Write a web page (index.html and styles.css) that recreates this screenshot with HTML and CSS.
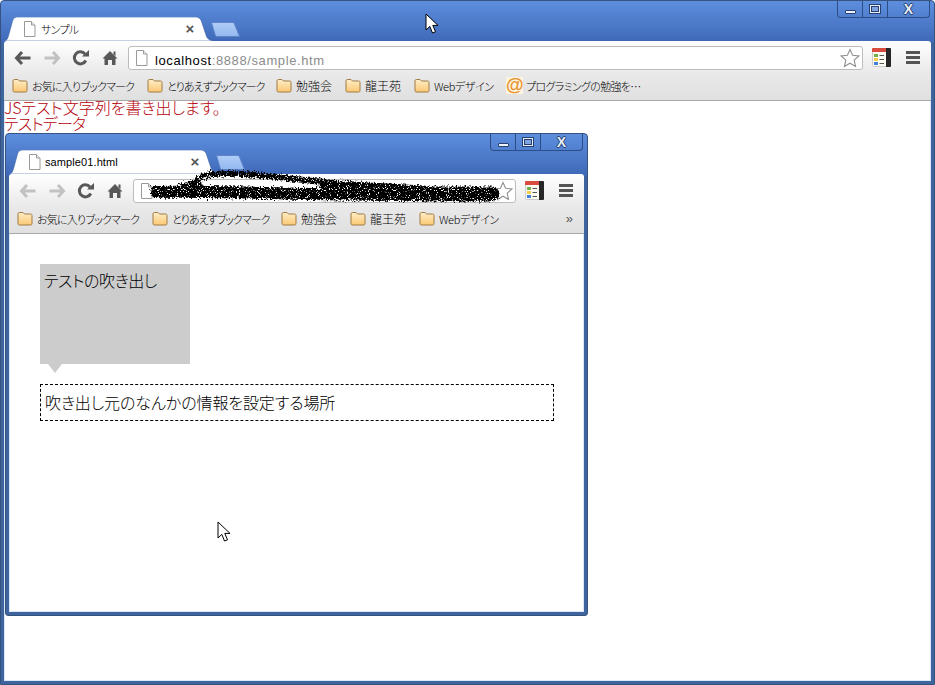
FILE: index.html
```html
<!DOCTYPE html>
<html lang="ja">
<head>
<meta charset="utf-8">
<title>サンプル</title>
<link rel="stylesheet" href="styles.css">
</head>
<body>
<svg class="defs" width="0" height="0" aria-hidden="true">
  <defs>
    <linearGradient id="folderfill" x1="0" y1="0" x2="0" y2="1"><stop offset="0" stop-color="#ffeec8"/><stop offset="1" stop-color="#fbc873"/></linearGradient>
    <linearGradient id="newtabfill" x1="0" y1="0" x2="0" y2="1"><stop offset="0" stop-color="#b0cdf7"/><stop offset="1" stop-color="#93b7ef"/></linearGradient>
    <filter id="rough" x="-5%" y="-40%" width="110%" height="180%">
      <feTurbulence type="fractalNoise" baseFrequency="0.55" numOctaves="2" seed="4" result="n"/>
      <feDisplacementMap in="SourceGraphic" in2="n" scale="7" result="d"/>
      <feTurbulence type="fractalNoise" baseFrequency="0.9" numOctaves="1" seed="9"/>
      <feColorMatrix type="matrix" values="0 0 0 0 0  0 0 0 0 0  0 0 0 0 0  9 0 0 0 -2.700" result="speck"/>
      <feComposite in="d" in2="speck" operator="in"/>
    </filter>
    <symbol id="tabshape" viewBox="0 0 212 24"><path d="M0 24C3 24 4 21 5 17L8 6C9 2 10 0 14 0H191C195 0 197 2 198 6L202 18C203 22 206 24 212 24Z" fill="#fff" stroke="#3f64a6" stroke-width=".6"/></symbol>
    <symbol id="newtab" viewBox="0 0 30 15"><path d="M1.500.5H22C23.500.5 24 1 24.500 2L29.500 14.500H7C6 14.500 5.500 14 5.200 13Z" fill="url(#newtabfill)" stroke="#5d85c8"/></symbol>
    <symbol id="doc" viewBox="0 0 13 16"><path d="M1.500.5H8.500L12 4V15.500H1.500Z" fill="#fff" stroke="#9a9a9a"/><path d="M8.500.5V4H12" fill="#eee" stroke="#9a9a9a"/></symbol>
    <symbol id="folder" viewBox="0 0 16 15"><path d="M1 3C1 2 1.500 1.500 2.500 1.500H6L7.500 3H13.500C14.500 3 15 3.500 15 4.500V12.500C15 13.500 14.500 14 13.500 14H2.500C1.500 14 1 13.500 1 12.500Z" fill="url(#folderfill)" stroke="#9f7a45"/></symbol>
    <symbol id="arrowleft" viewBox="0 0 18 16"><path d="M8 2L2.500 8L8 14M3 8H16.500" fill="none" stroke="currentColor" stroke-width="3"/></symbol>
    <symbol id="arrowright" viewBox="0 0 18 16"><path d="M10 2L15.500 8L10 14M15 8H1.500" fill="none" stroke="currentColor" stroke-width="3"/></symbol>
    <symbol id="reload" viewBox="0 0 18 18"><path d="M13.800 11.500A6 6 0 1 1 13 5" fill="none" stroke="#585858" stroke-width="3"/><path d="M10 7.500H17V1Z" fill="#585858"/></symbol>
    <symbol id="home" viewBox="0 0 16 16"><path d="M8 1L15.500 8.500H13.500V15H10V10H6V15H2.500V8.500H.5Z" fill="#585858"/><path d="M11.500 1.500H13.500V6L11.500 4.500Z" fill="#585858"/></symbol>
    <symbol id="star" viewBox="0 0 20 20"><path d="M10 1.500L12.600 7.300L18.900 8L14.200 12.200L15.500 18.400L10 15.200L4.500 18.400L5.800 12.200L1.100 8L7.400 7.300Z" fill="#fff" stroke="#8f8f8f" stroke-width="1.100"/></symbol>
    <symbol id="calendar" viewBox="0 0 19 19"><rect x=".5" y=".5" width="18" height="18" rx="1" fill="#fbfbf4" stroke="#ccc"/><path d="M0 1A1 1 0 0 1 1 0H14V4H0Z" fill="#d94b3d"/><path d="M14 0H18A1 1 0 0 1 19 1V18A1 1 0 0 1 18 19H14Z" fill="#262626"/><rect x="2" y="6" width="4" height="3" fill="#74b04a"/><rect x="2" y="10" width="4" height="3" fill="#efcf4f"/><rect x="2" y="14" width="4" height="3" fill="#3f83d8"/><path d="M7.500 7.500H12M7.500 11.500H12M7.500 15.500H12" stroke="#555"/></symbol>
    <symbol id="menu" viewBox="0 0 14 13"><path d="M0 0H14V3H0ZM0 5H14V8H0ZM0 10H14V13H0Z" fill="#555"/></symbol>
    <symbol id="cursor" viewBox="0 0 14 22"><path d="M1 1V17L4.800 13.400L7.500 20L10.500 18.800L7.800 12.400H13Z" fill="#fff" stroke="#000" stroke-linejoin="miter"/></symbol>
  </defs>
</svg>

<div class="window window-outer">
  <div class="titlebar">
    <div class="tab tab-wide">
      <svg class="tab-shape" aria-hidden="true"><use href="#tabshape"/></svg>
      <svg class="doc-icon"><use href="#doc"/></svg>
      <span class="tab-title">サンプル</span>
      <span class="tab-close">×</span>
    </div>
    <svg class="new-tab" aria-hidden="true"><use href="#newtab"/></svg>
    <div class="controls">
      <span class="ctl ctl-min"><i></i></span>
      <span class="ctl ctl-max"><i></i></span>
      <span class="ctl ctl-close">X</span>
    </div>
  </div>
  <div class="toolbar">
    <span class="nav nav-on"><svg class="nav-arrow"><use href="#arrowleft"/></svg></span>
    <span class="nav nav-off"><svg class="nav-arrow"><use href="#arrowright"/></svg></span>
    <span class="nav"><svg class="nav-reload"><use href="#reload"/></svg></span>
    <span class="nav"><svg class="nav-home"><use href="#home"/></svg></span>
    <div class="omnibox">
      <svg class="doc-icon omni-doc"><use href="#doc"/></svg>
      <span class="url"><b>localhost</b>:8888/sample.htm</span>
      <svg class="star"><use href="#star"/></svg>
    </div>
    <div class="tool-right">
      <svg class="cal"><use href="#calendar"/></svg>
      <svg class="menu"><use href="#menu"/></svg>
    </div>
  </div>
  <div class="bookmarks">
    <span class="bm bm-1"><svg class="folder"><use href="#folder"/></svg>お気に入りブックマーク</span>
    <span class="bm bm-2"><svg class="folder"><use href="#folder"/></svg>とりあえずブックマーク</span>
    <span class="bm bm-3"><svg class="folder"><use href="#folder"/></svg>勉強会</span>
    <span class="bm bm-4"><svg class="folder"><use href="#folder"/></svg>龍王苑</span>
    <span class="bm bm-5"><svg class="folder"><use href="#folder"/></svg>Webデザイン</span>
    <span class="bm bm-6"><span class="at-icon">@</span>プログラミングの勉強を…</span>
  </div>
  <div class="page">
    <p class="js-text">JSテスト文字列を書き出します。<br><span class="js-data">テストデータ</span></p>

    <div class="window window-inner">
      <div class="titlebar">
        <div class="tab">
          <svg class="tab-shape" aria-hidden="true"><use href="#tabshape"/></svg>
          <svg class="doc-icon"><use href="#doc"/></svg>
          <span class="tab-title tab-title-latin">sample01.html</span>
          <span class="tab-close">×</span>
        </div>
        <svg class="new-tab" aria-hidden="true"><use href="#newtab"/></svg>
        <div class="controls">
          <span class="ctl ctl-min"><i></i></span>
          <span class="ctl ctl-max"><i></i></span>
          <span class="ctl ctl-close">X</span>
        </div>
      </div>
      <div class="toolbar">
        <span class="nav nav-off"><svg class="nav-arrow"><use href="#arrowleft"/></svg></span>
        <span class="nav nav-off"><svg class="nav-arrow"><use href="#arrowright"/></svg></span>
        <span class="nav"><svg class="nav-reload"><use href="#reload"/></svg></span>
        <span class="nav"><svg class="nav-home"><use href="#home"/></svg></span>
        <div class="omnibox">
          <svg class="doc-icon omni-doc"><use href="#doc"/></svg>
          <svg class="star"><use href="#star"/></svg>
          <svg class="scribble" viewBox="0 0 384 44" aria-hidden="true">
            <g fill="none" stroke="#000" stroke-linecap="round" stroke-linejoin="round" filter="url(#rough)">
              <path d="M22 27C70 26 120 28 180 29S300 31 359 29" stroke-width="12"/>
              <path d="M52 24C60 18 66 10 78 9C110 7 150 13 190 17S240 21 290 24" stroke-width="6"/>
              <path d="M50 25L62 22" stroke-width="14"/>
              <path d="M190 20L290 25" stroke-width="9"/>
              <path d="M290 29L358 29" stroke-width="15"/>
            </g>
          </svg>
        </div>
        <div class="tool-right">
          <svg class="cal"><use href="#calendar"/></svg>
          <svg class="menu"><use href="#menu"/></svg>
        </div>
      </div>
      <div class="bookmarks">
        <span class="bm bm-1"><svg class="folder"><use href="#folder"/></svg>お気に入りブックマーク</span>
        <span class="bm bm-2"><svg class="folder"><use href="#folder"/></svg>とりあえずブックマーク</span>
        <span class="bm bm-3"><svg class="folder"><use href="#folder"/></svg>勉強会</span>
        <span class="bm bm-4"><svg class="folder"><use href="#folder"/></svg>龍王苑</span>
        <span class="bm bm-5"><svg class="folder"><use href="#folder"/></svg>Webデザイン</span>
        <span class="more">»</span>
      </div>
      <div class="page page-inner">
        <div class="bubble">テストの吹き出し</div>
        <div class="source">吹き出し元のなんかの情報を設定する場所</div>
        <svg class="cursor cursor-inner" aria-hidden="true"><use href="#cursor"/></svg>
      </div>
    </div>
  </div>
  <svg class="cursor cursor-outer" aria-hidden="true"><use href="#cursor"/></svg>
</div>
</body>
</html>
```
FILE: styles.css
```css
* { box-sizing: border-box; }
html, body { margin: 0; padding: 0; background: #fff; }
body {
  width: 935px;
  height: 685px;
  overflow: hidden;
  font-family: "Noto Sans CJK JP", "Liberation Sans", sans-serif;
  font-weight: 300;
  font-feature-settings: "palt";
}
.defs { position: absolute; }

.window {
  position: relative;
  display: flex;
  flex-direction: column;
  border: 1px solid #36527f;
  border-radius: 4px 4px 0 0;
  background: linear-gradient(#5d8ede 0, #3f69b8 41px, #3f659f 42px);
  padding: 0 3px 3px;
}
.window-outer { width: 935px; height: 685px; }
.window-inner {
  width: 583px;
  height: 483px;
  margin-left: 1px;
  border-radius: 4px 4px 3px 3px;
}

.titlebar {
  position: relative;
  height: 40px;
  flex: none;
  display: flex;
  align-items: flex-start;
}
.tab {
  position: relative;
  width: 212px;
  height: 24px;
  margin-top: 16px;
  flex: none;
  display: flex;
  align-items: center;
  font-size: 11px;
  color: #000;
}
.tab-shape { position: absolute; left: 0; top: 0; width: 212px; height: 24px; }
.doc-icon { position: relative; width: 13px; height: 16px; margin-left: 19px; flex: none; }
.tab-title { position: relative; margin-left: 5px; flex: 1; line-height: 24px; letter-spacing: -.7px; }
.tab-title-latin { margin-left: 4px; font-family: "Liberation Sans", sans-serif; font-size: 11px; letter-spacing: .1px; }
.tab-close { position: relative; width: 12px; margin-right: 20px; font-family: "Liberation Sans", sans-serif; font-size: 15px; font-weight: 700; line-height: 24px; color: #555; text-align: center; }
.new-tab {
  width: 30px;
  height: 15px;
  margin: 21px 0 0 -6px;
  flex: none;
}
.controls {
  display: flex;
  margin-left: auto;
  margin-right: 1px;
  height: 17px;
  border: 1px solid #2e4d85;
  border-top: 0;
  border-radius: 0 0 4px 4px;
}
.ctl {
  display: flex;
  align-items: center;
  justify-content: center;
  width: 25px;
  border-right: 1px solid #2e4d85;
}
.ctl-close {
  width: 41px;
  border-right: 0;
  font-family: "Liberation Sans", sans-serif;
  font-size: 14px;
  font-weight: 700;
  line-height: 14px;
  color: #e8eef8;
  text-shadow: 1px 0 0 #24406f, -1px 0 0 #24406f, 0 1px 0 #24406f, 0 -1px 0 #24406f;
}
.ctl-min i { display: block; width: 11px; height: 4px; margin-top: 5px; background: #eef3fb; border: 1px solid #28406f; border-radius: 1px; }
.ctl-max i { display: block; width: 12px; height: 10px; background: #7ea3e0; border: 1px solid #28406f; box-shadow: inset 0 0 0 1px #e6edf8, inset 0 0 0 2px #28406f; }

.toolbar {
  flex: none;
  height: 33px;
  display: flex;
  align-items: center;
  padding-left: 4px;
  background: linear-gradient(#fff, #e9e9e9);
  border-radius: 3px 3px 0 0;
}
.nav {
  width: 29px;
  height: 20px;
  display: flex;
  align-items: center;
  justify-content: center;
  flex: none;
}
.nav-on { color: #585858; }
.nav-off { color: #c2c2c2; }
.nav-arrow { width: 18px; height: 16px; }
.nav-reload { width: 18px; height: 18px; }
.nav-home { width: 16px; height: 16px; }

.omnibox {
  position: relative;
  flex: 1;
  height: 24px;
  margin: 1px 0 0 4px;
  display: flex;
  align-items: center;
  background: #fff;
  border: 1px solid #bcbcbc;
  border-radius: 3px;
}
.omni-doc { margin-left: 6px; }
.url {
  margin-left: 7px;
  padding-top: 5px;
  font-family: "Liberation Sans", sans-serif;
  font-size: 13px;
  letter-spacing: .6px;
  color: #8c8c8c;
}
.url b { font-weight: 400; color: #000; }
.star { width: 20px; height: 20px; margin-left: auto; margin-right: 2px; flex: none; }
.scribble { position: absolute; left: 0; top: -15px; width: 384px; height: 44px; overflow: visible; }
.tool-right {
  width: 68px;
  flex: none;
  display: flex;
  align-items: center;
  padding-left: 9px;
}
.cal { width: 19px; height: 19px; flex: none; }
.menu { width: 14px; height: 13px; margin-left: 15px; flex: none; }

.bookmarks {
  flex: none;
  height: 27px;
  padding: 0 0 3px 8px;
  display: flex;
  align-items: center;
  background: linear-gradient(#e9e9e9, #e0e0e0);
  border-bottom: 1px solid #a9a9a9;
  font-size: 11px;
  color: #000;
  white-space: nowrap;
}
.bm { display: inline-flex; align-items: center; flex: none; }
.folder { width: 16px; height: 15px; margin-right: 4px; flex: none; }
.bm-1 { width: 135px; letter-spacing: -.8px; }
.bm-2 { width: 129px; letter-spacing: -1px; }
.bm-3 { width: 69px; font-size: 12px; }
.bm-4 { width: 69px; font-size: 12px; }
.bm-5 { width: 92px; letter-spacing: -.35px; }
.bm-6 { letter-spacing: -.7px; }
.at-icon {
  width: 17px;
  margin-right: 3px;
  font-family: "Liberation Sans", sans-serif;
  font-size: 18px;
  font-weight: 700;
  line-height: 17px;
  letter-spacing: 0;
  text-align: center;
  color: #e8922c;
  background: #fdf3df;
}
.more { margin-left: auto; margin-right: 11px; font-family: "Liberation Sans", sans-serif; font-size: 13px; color: #555; }

.page {
  flex: 1;
  min-height: 0;
  background: #fff;
  box-shadow: inset 1px 0 #dbe7f8, inset -1px 0 #dbe7f8, inset 0 -1px #dbe7f8;
}
.js-text {
  margin: -2px 0 2px;
  font-size: 16px;
  line-height: 16px;
  color: #b5000a;
  white-space: nowrap;
}
.js-data { letter-spacing: -.8px; }
.page-inner { position: relative; padding: 30px 0 0 31px; }
.bubble {
  position: relative;
  width: 150px;
  height: 100px;
  padding: 6px 4px;
  background: #ccc;
  font-size: 16px;
  line-height: 20px;
  letter-spacing: -.4px;
  color: #000;
}
.bubble::after {
  content: "";
  position: absolute;
  left: 8px;
  top: 100%;
  border: solid transparent;
  border-width: 9px 7px 0;
  border-top-color: #ccc;
}
.source {
  width: 514px;
  height: 37px;
  margin-top: 20px;
  padding: 0 4px;
  border: 1px dashed #000;
  font-size: 16px;
  line-height: 35px;
  letter-spacing: -.1px;
  color: #000;
}
.cursor { position: absolute; width: 14px; height: 22px; }
.cursor-outer { left: 424px; top: 12px; }
.cursor-inner { left: 208px; top: 287px; }
```
